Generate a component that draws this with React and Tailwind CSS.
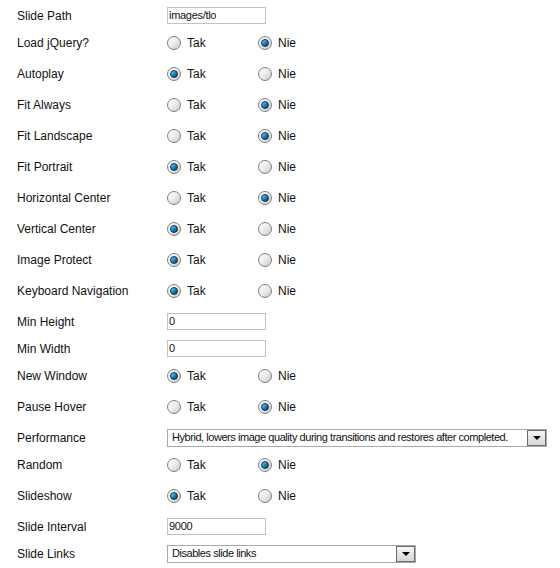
const rows = [
  { label: 'Slide Path', type: 'input', value: 'images/tlo' },
  { label: 'Load jQuery?', type: 'radio', on: 'nie' },
  { label: 'Autoplay', type: 'radio', on: 'tak' },
  { label: 'Fit Always', type: 'radio', on: 'nie' },
  { label: 'Fit Landscape', type: 'radio', on: 'nie' },
  { label: 'Fit Portrait', type: 'radio', on: 'tak' },
  { label: 'Horizontal Center', type: 'radio', on: 'nie' },
  { label: 'Vertical Center', type: 'radio', on: 'tak' },
  { label: 'Image Protect', type: 'radio', on: 'tak' },
  { label: 'Keyboard Navigation', type: 'radio', on: 'tak' },
  { label: 'Min Height', type: 'input', value: '0' },
  { label: 'Min Width', type: 'input', value: '0' },
  { label: 'New Window', type: 'radio', on: 'tak' },
  { label: 'Pause Hover', type: 'radio', on: 'nie' },
  { label: 'Performance', type: 'select', wide: true, value: 'Hybrid, lowers image quality during transitions and restores after completed.' },
  { label: 'Random', type: 'radio', on: 'nie' },
  { label: 'Slideshow', type: 'radio', on: 'tak' },
  { label: 'Slide Interval', type: 'input', value: '9000' },
  { label: 'Slide Links', type: 'select', value: 'Disables slide links' },
]

function Radio({ checked }) {
  return (
    <span className="w-[14px] h-[14px] rounded-full border border-[#7e7e7e] bg-gradient-to-br from-white via-[#ececec] to-[#c8c8c8] flex items-center justify-center shrink-0">
      {checked && (
        <span className="w-[8px] h-[8px] rounded-full bg-gradient-to-br from-[#7fd3f7] via-[#1b86c0] to-[#083b5e] border border-[#0b2f48]" />
      )}
    </span>
  )
}

function Option({ text, checked }) {
  return (
    <div className="flex items-center gap-[6px] w-[91px]">
      <Radio checked={checked} />
      <span>{text}</span>
    </div>
  )
}

function Select({ value, wide }) {
  return (
    <div className={`flex items-center h-[18px] border border-[#a9a9a9] bg-white ${wide ? 'w-[380px]' : 'w-[249px]'}`}>
      <span className="flex-1 pl-[4px] text-[11px] tracking-[-0.45px] leading-none whitespace-nowrap overflow-hidden">{value}</span>
      <span className="w-[19px] h-[16px] border border-[#6b6b6b] bg-gradient-to-b from-[#f6f6f6] to-[#d6d6d6] flex items-center justify-center">
        <span className="w-0 h-0 border-l-[4px] border-r-[4px] border-t-[4px] border-l-transparent border-r-transparent border-t-black" />
      </span>
    </div>
  )
}

export default function App() {
  return (
    <div className="bg-white pt-[2px] pl-[17px] text-[12px] text-[#111] font-['Liberation_Sans',Arial,sans-serif]">
      {rows.map((row) => (
        <div
          key={row.label}
          className={`flex items-center h-[27px] ${row.type === 'radio' ? 'mb-[4px]' : ''}`}
        >
          <span className="w-[150px] shrink-0">{row.label}</span>
          {row.type === 'input' && (
            <div className="w-[99px] h-[17px] border border-[#c2c2c2] flex items-center pl-[1px] text-[11px] tracking-[-0.3px] leading-none">
              {row.value}
            </div>
          )}
          {row.type === 'radio' && (
            <div className="flex items-center">
              <Option text="Tak" checked={row.on === 'tak'} />
              <Option text="Nie" checked={row.on === 'nie'} />
            </div>
          )}
          {row.type === 'select' && <Select value={row.value} wide={row.wide} />}
        </div>
      ))}
    </div>
  )
}
